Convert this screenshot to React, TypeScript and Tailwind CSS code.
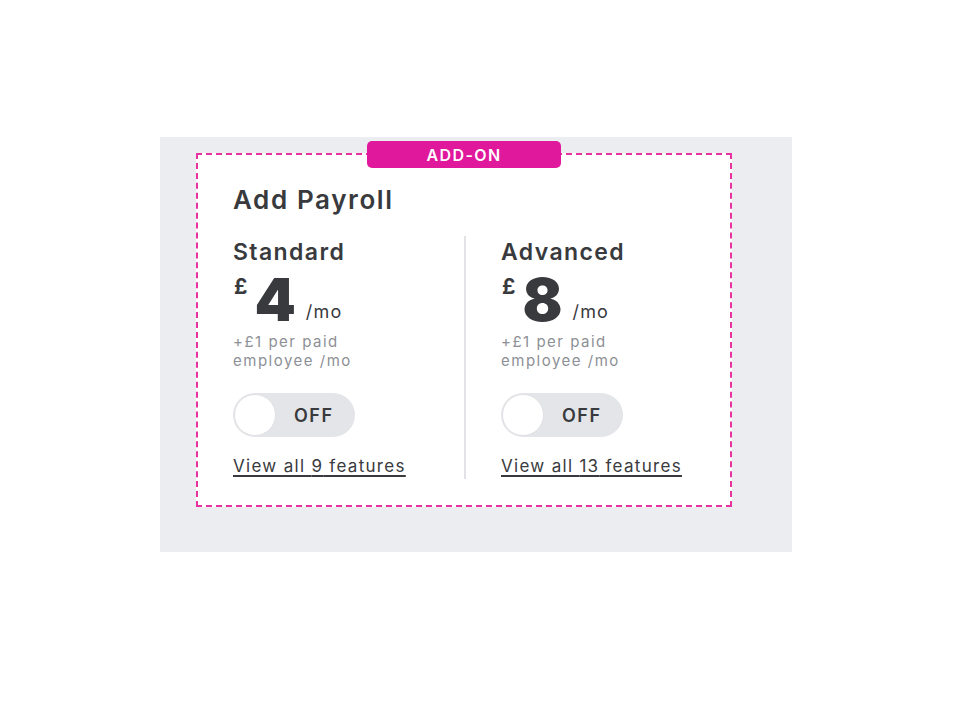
import React from "react";

const FONT = { fontFamily: "Inter, 'Noto Sans', sans-serif" };

interface Plan {
  name: string;
  price: string;
  features: number;
}

const PLANS: Plan[] = [
  { name: "Standard", price: "4", features: 9 },
  { name: "Advanced", price: "8", features: 13 },
];

function PlanColumn({ plan }: { plan: Plan }) {
  return (
    <div className="flex flex-col pt-[8px]">
      <h3 className="text-[23px] font-semibold leading-[28px] tracking-[1.4px] text-[#393a3d]">{plan.name}</h3>
      <div className="mt-[10px] flex h-[56px] items-start text-[#393a3d]">
        <span className="ml-[1px] text-[21px] font-bold leading-[22px]">£</span>
        <span className="ml-[7px] mt-[-6px] text-[59px] font-black leading-[60px]">{plan.price}</span>
        <span className="ml-[10px] mt-[25px] text-[18px] leading-[22px] tracking-[1.2px]">/mo</span>
      </div>
      <p className="w-[150px] text-[15px] leading-[19px] tracking-[1.5px] text-[#8d9096]">
        +£1 per paid
        <br />
        employee /mo
      </p>
      <button
        type="button"
        className="mt-[23px] flex h-[44px] w-[122px] items-center rounded-full bg-[#e4e5e8] p-[1px]"
      >
        <span className="h-[42px] w-[42px] rounded-full border border-[#e0e1e4] bg-white" />
        <span className="ml-[18px] text-[18px] font-semibold tracking-[1.5px] text-[#393a3d]">OFF</span>
      </button>
      <a
        href="#"
        className="mt-[18px] self-start text-[17px] leading-[22px] tracking-[1.3px] text-[#393a3d] underline decoration-[1.5px] underline-offset-[3px]"
      >
        View all {plan.features} features
      </a>
    </div>
  );
}

export default function App() {
  return (
    <div className="min-h-screen bg-white" style={FONT}>
      <div className="ml-[160px] pt-[137px]">
        <div className="h-[415px] w-[632px] bg-[#ecedf0] pl-[36px] pt-[16px]">
          <div className="relative h-[354px] w-[536px] border-2 border-dashed border-[#e8329f] bg-white pl-[35px] pt-[28px]">
            <div className="absolute left-1/2 top-[-14px] flex h-[27px] w-[194px] -translate-x-1/2 items-center justify-center rounded-[5px] bg-[#e0189c] text-[16px] font-semibold tracking-[1.4px] text-white">
              ADD-ON
            </div>
            <h2 className="text-[26px] font-semibold leading-[34px] tracking-[1.6px] text-[#393a3d]">Add Payroll</h2>
            <div className="mt-[13px] flex">
              <div className="w-[231px]">
                <PlanColumn plan={PLANS[0]} />
              </div>
              <div className="mt-[6px] h-[243px] w-[2px] bg-[#e2e3e6]" />
              <div className="pl-[35px]">
                <PlanColumn plan={PLANS[1]} />
              </div>
            </div>
          </div>
        </div>
      </div>
    </div>
  );
}
